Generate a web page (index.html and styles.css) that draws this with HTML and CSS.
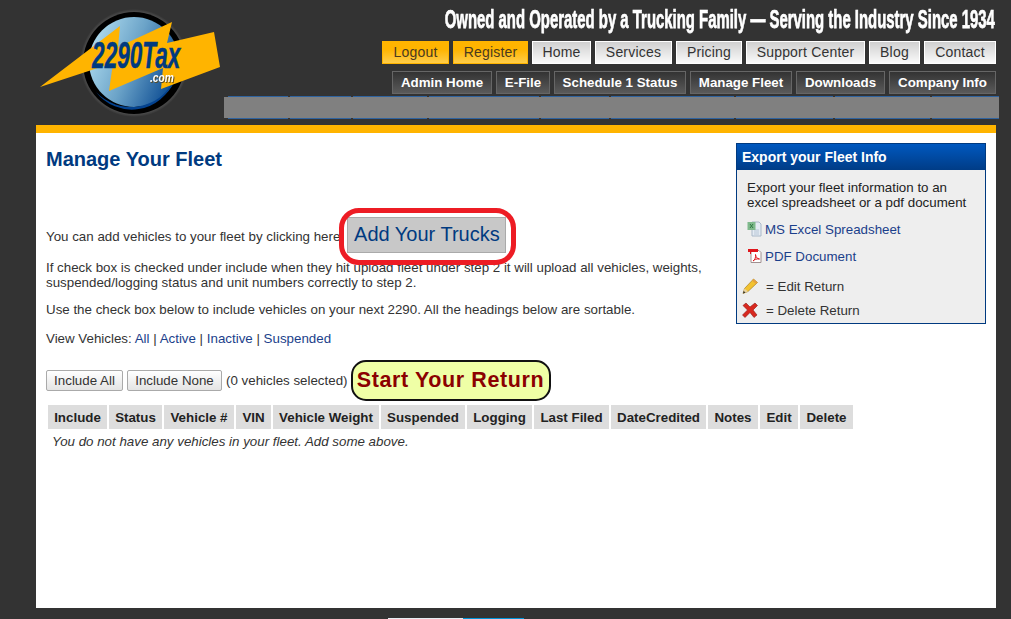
FILE: index.html
```html
<!DOCTYPE html>
<html lang="en">
<head>
<meta charset="utf-8">
<title>Manage Your Fleet - 2290Tax</title>
<link rel="stylesheet" href="styles.css">
</head>
<body>
<div class="page">
  <header class="header">
    <a class="logo" href="#" aria-label="2290Tax.com">
      <svg width="188" height="118" viewBox="0 0 188 118">
        <defs>
          <linearGradient id="globe" x1="0" y1="0.2" x2="1" y2="0.6">
            <stop offset="0" stop-color="#b4e0f2"/>
            <stop offset="0.5" stop-color="#6ba3c8"/>
            <stop offset="1" stop-color="#0b4b92"/>
          </linearGradient>
          <radialGradient id="halo">
            <stop offset="0.85" stop-color="#777"/>
            <stop offset="1" stop-color="#333"/>
          </radialGradient>
        </defs>
        <circle cx="98" cy="63" r="54" fill="url(#halo)"/>
        <circle cx="98" cy="63" r="51" fill="#000"/>
        <circle cx="98" cy="62" r="45" fill="url(#globe)"/>
        <path d="M60 92a45 45 0 0 0 78 -12a48 48 0 0 1 -78 12z" fill="#03428f"/>
        <polygon fill="#ffb400" points="4,87 84,26 82,47 136,22 131,43 178,32 184,67 125,89 127,68 73,91 77,63"/>
        <text x="92" y="68" class="logo-main" transform="scale(.61 1)">2290Tax</text>
        <text x="133" y="82" class="logo-com" transform="scale(.857 1)">.com</text>
      </svg>
    </a>
    <div class="head-right">
      <div class="tagline">Owned and Operated by a Trucking Family — Serving the Industry Since 1934</div>
      <nav class="nav nav-top">
        <a class="orange w67" href="#">Logout</a>
        <a class="orange w75" href="#">Register</a>
        <a class="light w59" href="#">Home</a>
        <a class="light w77" href="#">Services</a>
        <a class="light w66" href="#">Pricing</a>
        <a class="light w119" href="#">Support Center</a>
        <a class="light w51" href="#">Blog</a>
        <a class="light w72" href="#">Contact</a>
      </nav>
      <nav class="nav nav-sub">
        <a class="dark w100" href="#">Admin Home</a>
        <a class="dark w54" href="#">E-File</a>
        <a class="dark w132" href="#">Schedule 1 Status</a>
        <a class="dark w102" href="#">Manage Fleet</a>
        <a class="dark w89" href="#">Downloads</a>
        <a class="dark w107" href="#">Company Info</a>
      </nav>
      <div class="strip">
        <span class="s1"></span><span class="s2"></span><span class="s3"></span><span class="s4"></span><span class="s5"></span><span class="s6"></span><span class="s7"></span><span class="s8"></span><span class="s9"></span>
      </div>
    </div>
  </header>

  <main class="main">
    <div class="content">
      <h1 class="title">Manage Your Fleet</h1>
      <p class="add-line"><span class="add-text">You can add vehicles to your fleet by clicking here</span>
        <span class="ring-wrap"><a class="add-btn" href="#">Add Your Trucks</a><span class="ring"></span></span>
      </p>
      <p class="para para-tight">If check box is checked under include when they hit upload fleet under step 2 it will upload all vehicles, weights, suspended/logging status and unit numbers correctly to step 2.</p>
      <p class="para">Use the check box below to include vehicles on your next 2290. All the headings below are sortable.</p>
      <p class="para view">View Vehicles: <a href="#">All</a> | <a href="#">Active</a> | <a href="#">Inactive</a> | <a href="#">Suspended</a></p>
      <div class="actions">
        <button class="btn" type="button">Include All</button>
        <button class="btn" type="button">Include None</button>
        <span class="count">(0 vehicles selected)</span>
        <a class="start" href="#">Start Your Return</a>
      </div>
      <table class="fleet">
        <thead>
          <tr><th class="c59">Include</th><th class="c53">Status</th><th class="c70">Vehicle #</th><th class="c35">VIN</th><th class="c106">Vehicle Weight</th><th class="c84">Suspended</th><th class="c65">Logging</th><th class="c75">Last Filed</th><th class="c95">DateCredited</th><th class="c50">Notes</th><th class="c38">Edit</th><th class="c53">Delete</th></tr>
        </thead>
        <tbody>
          <tr><td colspan="12" class="empty">You do not have any vehicles in your fleet. Add some above.</td></tr>
        </tbody>
      </table>
    </div>
    <aside class="side">
      <h2 class="side-title">Export your Fleet Info</h2>
      <div class="side-body">
        <p class="side-text">Export your fleet information to an excel spreadsheet or a pdf document</p>
        <a class="doc" href="#">
          <svg class="doc-ico" width="16" height="16" viewBox="0 0 16 16"><path d="M5 1h7l2 2v12H5z" fill="#e4ebf3" stroke="#aab8c8"/><path d="M7 9h5M7 11h5M7 13h5" stroke="#b8c6d6"/><rect x="0.5" y="1" width="8" height="8" fill="#7fb98c"/><path d="M3 3l3 4M6 3l-3 4" stroke="#2f7a43"/></svg>
          <span>MS Excel Spreadsheet</span>
        </a>
        <a class="doc doc-pdf" href="#">
          <svg class="doc-ico" width="16" height="16" viewBox="0 0 16 16"><path d="M4 2.500h8l2 2v10H4z" fill="#fff" stroke="#a09090"/><path d="M1 1h10v3H4v2H3V4H1z" fill="#e0161c"/><path d="M6 13c2-1 3-4 2.500-6.500 .5 3 1.500 4 4 4.500-3-.5-5 .5-6.500 2z" fill="none" stroke="#e0161c"/></svg>
          <span>PDF Document</span>
        </a>
        <div class="key key-edit">
          <svg width="16" height="16" viewBox="0 0 16 16"><path d="M1 15.500l1.500-5L11.500 1l4 3.500L6 13.500z" fill="#f2c230" stroke="#9a7414" stroke-width=".6"/><path d="M1 15.500l1.500-5 3.500 3z" fill="#e8d2a0"/><path d="M1 15.500l.7-2.500 1.700 1.500z" fill="#222"/><path d="M11.500 1l4 3.500-1.500 1.500-4-3.500z" fill="#e6a040"/></svg>
          <span>= Edit Return</span>
        </div>
        <div class="key">
          <svg width="16" height="16" viewBox="0 0 16 16"><path d="M1 3.500L4 1l4 4 5-4 2.500 2.500-4.500 4.500 4 5-3 2.500-4-5-5 5L.5 13l5-5z" fill="#d8281f" stroke="#8f1a14" stroke-width=".6"/></svg>
          <span>= Delete Return</span>
        </div>
      </div>
    </aside>
  </main>
  <footer class="footer"><span class="foot-light"></span><span class="foot-blue"></span></footer>
</div>
</body>
</html>
```
FILE: styles.css
```css
* { box-sizing: border-box; }
html, body { margin: 0; height: 100%; }
body {
  background: #333;
  font-family: "Liberation Sans", Arial, sans-serif;
  font-size: 13.33px;
  color: #333;
  overflow: hidden;
}
a { color: #1b3f8b; text-decoration: none; }
.page { width: 1011px; height: 619px; display: flex; flex-direction: column; }

.header { height: 125px; display: flex; padding-left: 36px; }
.logo { width: 188px; flex: none; display: block; }
.logo svg { display: block; }
.logo-main { font: italic bold 37px "Liberation Sans", sans-serif; fill: #003a80; stroke: #003a80; stroke-width: .5px; }
.logo-com { font: italic bold 12px "Liberation Sans", sans-serif; fill: #fff; filter: drop-shadow(1px 1px 0 #5a4a20); }

.head-right { flex: 1; min-width: 0; display: flex; flex-direction: column; align-items: flex-end; }
.tagline {
  flex: none;
  margin: 5px 16px 0 0;
  height: 27px;
  font: bold 21px/27px "Liberation Sans", sans-serif;
  -webkit-text-stroke: .6px #fff;
  color: #fff;
  white-space: nowrap;
  transform: scale(.71, 1.25);
  transform-origin: right center;
}
.nav { display: flex; gap: 4px; margin-right: 15px; }
.nav a {
  display: block; height: 23px; line-height: 21px; text-align: center;
  font-size: 14px; letter-spacing: .2px; white-space: nowrap;
}
.nav-top { margin-top: 9px; }
.nav-sub { margin-top: 7px; }
.orange { background: linear-gradient(#ffb400 35%, #ffcd4a); color: #4a3a20; border: 1px solid #ffb400; }
.light { background: linear-gradient(#d0d0d0, #fafafa); color: #333; border: 1px solid #fff; }
.nav .dark { background: linear-gradient(#333, #5a5a5a); color: #fff; border: 1px solid #666; font-size: 13.33px; font-weight: bold; letter-spacing: 0; }
.w51 { width: 51px; } .w54 { width: 54px; } .w59 { width: 59px; } .w66 { width: 66px; } .w67 { width: 67px; }
.w72 { width: 72px; } .w75 { width: 75px; } .w77 { width: 77px; } .w89 { width: 89px; }
.w100 { width: 100px; } .w102 { width: 102px; } .w107 { width: 107px; } .w119 { width: 119px; } .w132 { width: 132px; }

.strip {
  width: 775px; height: 23px; margin: 2px 12px 0 0; flex: none;
  display: flex; gap: 2px; padding-left: 4px;
  background: linear-gradient(#808080, #808080) 0 1px / 100% 21px no-repeat;
}
.strip span { display: block; height: 100%; border-top: 1px solid #2f639f; border-bottom: 1px solid #2f639f; }
.s1 { width: 60px; } .s2 { width: 61px; } .s3 { width: 74px; } .s4 { width: 110px; }
.s5 { width: 68px; } .s6 { width: 123px; } .s7 { width: 97px; } .s8 { width: 95px; } .s9 { width: 67px; }

.main {
  width: 960px; height: 483px; margin-left: 36px;
  background: #fff; border-top: 8px solid #ffb400;
  display: flex; align-items: flex-start; padding: 10px 10px 0;
}
.content { width: 690px; flex: none; }
.title { margin: 5px 0 0; font-size: 20px; line-height: 23px; color: #003a80; }
.add-line { margin: 41px 0 0; height: 45px; display: flex; align-items: center; gap: 7px; white-space: nowrap; }
.add-text { margin-top: 4px; }
.ring-wrap { position: relative; display: block; }
.add-btn {
  display: block; width: 159px; height: 36px; line-height: 33px; text-align: center;
  background: #c8c8c8; border: 1px solid #aaa; font-size: 20px; color: #003a80;
}
.ring {
  position: absolute; left: -8px; top: -9px; width: 177px; height: 57px;
  border: 5px solid #ed1c24; border-radius: 20px;
}
.para { margin: 12px 0 0; line-height: 15px; white-space: normal; }
.para-tight { margin-top: 3px; }
.view { margin-top: 14px; }
.view a, .para a { color: #1b3f8b; }
.actions { display: flex; align-items: center; margin-top: 13px; height: 42px; }
.btn {
  height: 21px; padding: 0; margin-right: 4px; width: 77px; white-space: nowrap;
  font: 13.33px "Liberation Sans", sans-serif; color: #333;
  background: linear-gradient(#fff, #e4e4e4); border: 1px solid #aaa; border-radius: 2px;
}
.btn + .btn { width: 95px; }
.count { white-space: nowrap; }
.start {
  margin-left: 3px; width: 200px; height: 41px; line-height: 37px; text-align: center;
  background: #efffa6; border: 2px solid #111; border-radius: 15px;
  color: #8b0000; font-size: 21.5px; font-weight: bold; letter-spacing: .6px; white-space: nowrap;
}
.fleet { border-collapse: separate; border-spacing: 2px 0; margin-top: 4px; table-layout: fixed; width: 809px; white-space: nowrap; }
.fleet th { background: #ddd; height: 24px; padding: 0; font-size: 13.33px; font-weight: bold; color: #222; text-align: center; }
.c35 { width: 35px; } .c38 { width: 38px; } .c50 { width: 50px; } .c53 { width: 53px; } .c59 { width: 59px; } .c65 { width: 65px; }
.c70 { width: 70px; } .c75 { width: 75px; } .c84 { width: 84px; } .c95 { width: 95px; } .c106 { width: 106px; }
.empty { padding: 5px 4px 0; font-style: italic; line-height: 15px; }

.side { width: 250px; border: 1px solid #003a80; background: #eee; height: 181px; }
.side-title {
  margin: 0; height: 26px; padding-left: 5px; line-height: 26px;
  font-size: 14px; color: #fff;
  background: linear-gradient(#0058bf, #003c86);
}
.side-body { padding: 10px 0 0 10px; }
.side-text { margin: 0; width: 228px; color: #222; line-height: 15px; }
.doc { display: flex; align-items: center; gap: 2px; margin-top: 11px; height: 16px; }
.doc-pdf { margin-top: 11px; }
.key { display: flex; align-items: center; gap: 8px; height: 16px; margin: 8px 0 0 -5px; }
.key-edit { margin-top: 14px; }
.footer { flex: 1; display: flex; align-items: flex-end; padding-left: 388px; }
.foot-light { width: 75px; height: 1px; background: #e8eef4; }
.foot-blue { width: 61px; height: 1px; background: #0095d9; }
```
